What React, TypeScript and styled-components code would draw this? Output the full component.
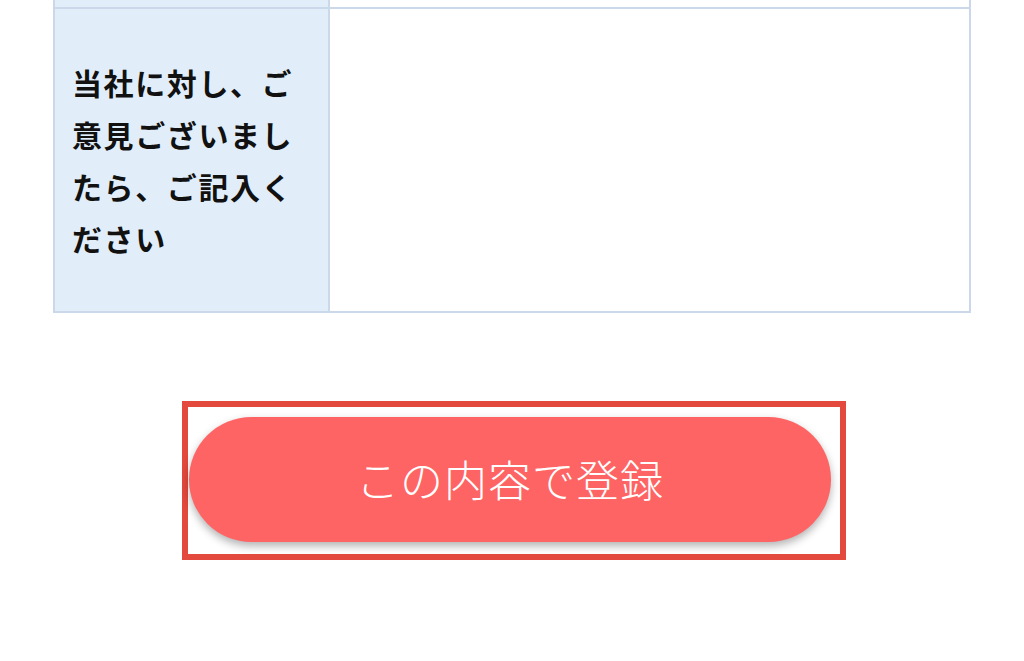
import styled, { createGlobalStyle } from 'styled-components';

const GlobalStyle = createGlobalStyle`
  html, body {
    margin: 0;
    padding: 0;
    background: #ffffff;
  }
  body {
    font-family: "Noto Sans CJK JP", "Noto Sans", sans-serif;
  }
`;

const Page = styled.div`
  width: 1024px;
  height: 661px;
  overflow: hidden;
  display: flex;
  flex-direction: column;
  align-items: center;
`;

const FormTable = styled.table`
  width: 918px;
  border-collapse: collapse;
  table-layout: fixed;
`;

const LabelCell = styled.th<{ $cut?: boolean }>`
  box-sizing: border-box;
  width: 275px;
  height: ${(p) => (p.$cut ? '8px' : '304px')};
  padding: 0 18px 0 17px;
  background: #e1eef9;
  border: 2px solid #cad8ea;
  border-top: ${(p) => (p.$cut ? 'none' : '2px solid #cad8ea')};
  text-align: left;
  vertical-align: middle;
  font-size: 30px;
  font-weight: 700;
  line-height: 52px;
  letter-spacing: 1.6px;
  color: #111111;
`;

const InputCell = styled.td<{ $cut?: boolean }>`
  background: #ffffff;
  border: 2px solid #cad8ea;
  border-top: ${(p) => (p.$cut ? 'none' : '2px solid #cad8ea')};
  padding: 0;
`;

const Highlight = styled.div`
  margin-top: 88px;
  margin-left: 4px;
  width: 646px;
  height: 137px;
  border: 6px solid #e4493d;
  padding: 10px 5px 0 1px;
`;

const SubmitButton = styled.button`
  display: flex;
  align-items: center;
  justify-content: center;
  width: 642px;
  height: 125px;
  border: none;
  border-radius: 63px;
  background: #ff6464;
  box-shadow: 0 4px 8px rgba(0, 0, 0, 0.3);
  color: #ffffff;
  font-family: "Noto Sans CJK JP", "Noto Sans", sans-serif;
  font-size: 43px;
  font-weight: 300;
  letter-spacing: 1px;
  padding: 0 0 4px;
  cursor: pointer;
`;

export default function App() {
  return (
    <>
      <GlobalStyle />
      <Page>
        <FormTable>
          <tbody>
            <tr>
              <LabelCell $cut />
              <InputCell $cut />
            </tr>
            <tr>
              <LabelCell>当社に対し、ご意見ございましたら、ご記入ください</LabelCell>
              <InputCell />
            </tr>
          </tbody>
        </FormTable>
        <Highlight>
          <SubmitButton type="button">この内容で登録</SubmitButton>
        </Highlight>
      </Page>
    </>
  );
}
